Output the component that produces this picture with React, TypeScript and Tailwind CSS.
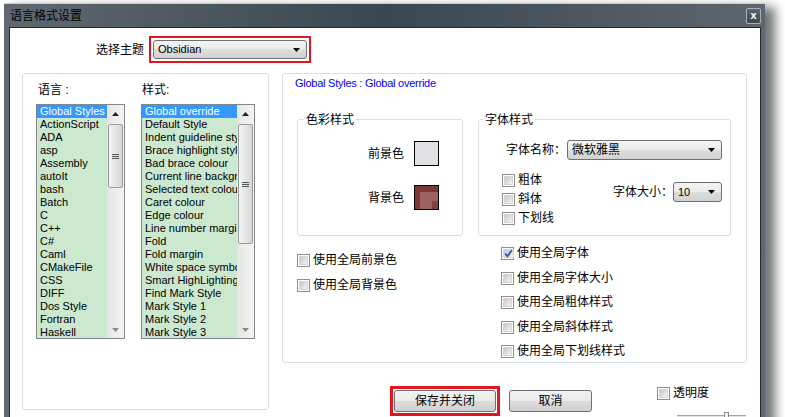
import React from "react";

const languages = [
  "Global Styles",
  "ActionScript",
  "ADA",
  "asp",
  "Assembly",
  "autoIt",
  "bash",
  "Batch",
  "C",
  "C++",
  "C#",
  "Caml",
  "CMakeFile",
  "CSS",
  "DIFF",
  "Dos Style",
  "Fortran",
  "Haskell",
];

const styles = [
  "Global override",
  "Default Style",
  "Indent guideline style",
  "Brace highlight style",
  "Bad brace colour",
  "Current line background colour",
  "Selected text colour",
  "Caret colour",
  "Edge colour",
  "Line number margin",
  "Fold",
  "Fold margin",
  "White space symbol",
  "Smart HighLighting",
  "Find Mark Style",
  "Mark Style 1",
  "Mark Style 2",
  "Mark Style 3",
];

const Checkbox = ({ checked = false }: { checked?: boolean }) => (
  <span className="flex w-[13px] h-[13px] shrink-0 border border-[#8e8f8f] bg-white p-[1px]">
    <span className="flex flex-1 items-center justify-center border border-[#d4d6d8] bg-linear-to-br from-[#c3c6ca] to-[#f6f6f6]">
      {checked && (
        <svg width="9" height="9" viewBox="0 0 9 9">
          <path d="M1.2 4.6 L3.4 7.2 L7.8 1.2" fill="none" stroke="#3b55a8" strokeWidth="1.9" />
        </svg>
      )}
    </span>
  </span>
);

const CheckRow = ({ label, checked }: { label: string; checked?: boolean }) => (
  <div className="flex items-center gap-[3px] h-[13px] text-[12px] leading-[13px] whitespace-nowrap">
    <Checkbox checked={checked} />
    <span>{label}</span>
  </div>
);

const Arrow = () => (
  <svg width="7" height="4" viewBox="0 0 7 4">
    <polygon points="0,0 7,0 3.5,4" fill="#000" />
  </svg>
);

const Select = ({ text, className, textClass }: { text: string; className: string; textClass: string }) => (
  <div
    className={`${className} flex items-center justify-between pl-[4px] pr-[6px] border border-[#707070] rounded-[3px] bg-[linear-gradient(to_bottom,#f4f4f4_0%,#ebebeb_50%,#dedede_50%,#d2d2d2_100%)]`}
  >
    <span className={textClass}>{text}</span>
    <Arrow />
  </div>
);

const Button = ({ label, className }: { label: string; className: string }) => (
  <div
    className={`${className} h-[22px] flex items-center justify-center border border-[#707070] rounded-[3px] text-[12px] bg-[linear-gradient(to_bottom,#f2f2f2_0%,#ebebeb_50%,#dddddd_50%,#cfcfcf_100%)]`}
  >
    {label}
  </div>
);

const ScrollBar = ({ thumb }: { thumb: string }) => (
  <div className="flex flex-col w-[17px] shrink-0 bg-linear-to-r from-[#e6e6e6] to-[#f4f4f4]">
    <div className="h-[17px] flex items-center justify-center">
      <svg width="7" height="4" viewBox="0 0 7 4">
        <polygon points="0,4 7,4 3.5,0" fill="#222" />
      </svg>
    </div>
    <div
      className={`${thumb} mt-[2px] mx-[1px] rounded-[2px] border border-[#9b9b9b] bg-linear-to-r from-[#f5f5f5] to-[#d6d6d6] flex flex-col items-center justify-center gap-[1px]`}
    >
      <span className="w-[7px] h-[1px] bg-[#555]" />
      <span className="w-[7px] h-[1px] bg-[#555]" />
      <span className="w-[7px] h-[1px] bg-[#555]" />
    </div>
    <div className="flex-1" />
    <div className="h-[17px] flex items-center justify-center">
      <svg width="7" height="4" viewBox="0 0 7 4">
        <polygon points="0,0 7,0 3.5,4" fill="#8a8a8a" />
      </svg>
    </div>
  </div>
);

const ListBox = ({ items, className, thumb }: { items: string[]; className: string; thumb: string }) => (
  <div className={`${className} h-[235px] flex border border-[#82878f] bg-[#cce8cf]`}>
    <div className="flex-1 overflow-hidden">
      {items.map((item, i) => (
        <div
          key={item}
          className={
            i === 0
              ? "h-[13px] leading-[13px] pl-[3px] text-[11px] whitespace-nowrap bg-[#3399ff] text-white"
              : "h-[13px] leading-[13px] pl-[3px] text-[11px] whitespace-nowrap text-black"
          }
        >
          {item}
        </div>
      ))}
    </div>
    <ScrollBar thumb={thumb} />
  </div>
);

const App = () => {
  return (
    <div className="w-[785px] h-[417px] overflow-hidden bg-white pt-[3px] pl-[4px] text-black font-['Liberation_Sans','Noto_Sans_CJK_SC',sans-serif]">
      <div className="flex flex-col w-[761px] h-[440px] border-t border-[#c9ced2] pl-[5px] pr-[4px] bg-linear-to-r from-[#5e6971] via-[#3b4750] to-[#5c6770] shadow-[10px_4px_10px_rgba(0,0,0,0.55)]">
        {/* title bar */}
        <div className="h-[23px] flex items-center justify-between pl-[1px]">
          <span className="text-[12px] leading-[14px]">语言格式设置</span>
          <div className="w-[15px] h-[16px] flex items-center justify-center border border-[#a9b2b8] rounded-[2px] bg-linear-to-b from-[#59646c] to-[#3d4850] text-white text-[11px] font-bold leading-none">
            x
          </div>
        </div>

        {/* client */}
        <div className="flex-1 flex flex-col border border-[#1f2b34] bg-white">
          <div className="flex items-center gap-[5px] mt-[8px] ml-[86px]">
            <span className="w-[48px] text-[12px] leading-[14px]">选择主题</span>
            <div className="border-2 border-[#e3151f] p-[2px]">
              <Select text="Obsidian" className="w-[154px] h-[19px]" textClass="text-[11px]" />
            </div>
          </div>

          <div className="flex gap-[13px] mt-[10px] ml-[12px]">
            {/* left box */}
            <div className="flex gap-[16px] w-[247px] h-[337px] pl-[13px] border border-[#d5dfe5] rounded-[3px]">
              <div className="flex flex-col">
                <span className="mt-[9px] pl-[2px] h-[14px] text-[12px] leading-[14px] whitespace-pre">语言 :</span>
                <div className="mt-[7px]">
                  <ListBox items={languages} className="w-[89px]" thumb="h-[64px]" />
                </div>
              </div>
              <div className="flex flex-col">
                <span className="mt-[9px] pl-[1px] h-[14px] text-[12px] leading-[14px]">样式:</span>
                <div className="mt-[7px]">
                  <ListBox items={styles} className="w-[114px]" thumb="h-[120px]" />
                </div>
              </div>
            </div>

            {/* right column */}
            <div className="flex flex-col">
              <div className="flex flex-col w-[465px] h-[290px] pl-[12px] border border-[#d5dfe5] rounded-[3px]">
                <span className="mt-[3px] text-[11px] leading-[13px] tracking-[-0.25px] text-[#0000ff]">
                  Global Styles : Global override
                </span>

                <div className="flex gap-[15px] mt-[29px] ml-[2px]">
                  <div className="relative w-[166px] h-[117px] border border-[#d5dfe5] rounded-[3px] flex flex-col items-end pt-[21px] pr-[23px] gap-[19px]">
                    <span className="absolute -top-[7px] left-[6px] px-[2px] bg-white text-[12px] leading-[14px]">
                      色彩样式
                    </span>
                    <div className="flex items-center gap-[10px]">
                      <span className="text-[12px] leading-[14px]">前景色</span>
                      <div className="w-[25px] h-[25px] border border-black bg-[#e1e1e3]" />
                    </div>
                    <div className="flex items-center gap-[10px]">
                      <span className="text-[12px] leading-[14px]">背景色</span>
                      <div className="w-[25px] h-[25px] border border-black bg-[#7a3838] flex items-end justify-end">
                        <div className="w-[18px] h-[17px] bg-[#9c6262] flex items-end justify-end">
                          <div className="w-[6px] h-[8px] bg-[#7f4040]" />
                        </div>
                      </div>
                    </div>
                  </div>

                  <div className="relative w-[253px] h-[117px] border border-[#d5dfe5] rounded-[3px] flex flex-col pt-[20px] pl-[23px] pr-[8px]">
                    <span className="absolute -top-[7px] left-[4px] px-[2px] bg-white text-[12px] leading-[14px]">
                      字体样式
                    </span>
                    <div className="flex items-center gap-[1px] pl-[4px]">
                      <span className="w-[60px] text-[12px] leading-[14px]">字体名称：</span>
                      <Select text="微软雅黑" className="w-[155px] h-[20px]" textClass="text-[12px]" />
                    </div>
                    <div className="flex justify-between mt-[14px]">
                      <div className="flex flex-col gap-[6px]">
                        <CheckRow label="粗体" />
                        <CheckRow label="斜体" />
                        <CheckRow label="下划线" />
                      </div>
                      <div className="flex items-center mt-[8px] h-[20px]">
                        <span className="w-[60px] text-[12px] leading-[14px]">字体大小：</span>
                        <Select text="10" className="w-[49px] h-[20px]" textClass="text-[11px]" />
                      </div>
                    </div>
                  </div>
                </div>

                <div className="flex ml-[2px]">
                  <div className="flex flex-col w-[166px] mt-[18px] gap-[12px]">
                    <CheckRow label="使用全局前景色" />
                    <CheckRow label="使用全局背景色" />
                  </div>
                  <div className="flex flex-col ml-[15px] pl-[23px] mt-[11px] gap-[11.5px]">
                    <CheckRow label="使用全局字体" checked />
                    <CheckRow label="使用全局字体大小" />
                    <CheckRow label="使用全局粗体样式" />
                    <CheckRow label="使用全局斜体样式" />
                    <CheckRow label="使用全局下划线样式" />
                  </div>
                </div>
              </div>

              {/* bottom buttons */}
              <div className="flex items-start mt-[23px] ml-[108px]">
                <div className="border-[3px] border-[#e3151f] p-[1px]">
                  <Button label="保存并关闭" className="w-[102px]" />
                </div>
                <Button label="取消" className="w-[83px] ml-[9px] mt-[4px]" />
                <div className="flex flex-col ml-[65px] mt-[1px]">
                  <CheckRow label="透明度" />
                  <div className="relative ml-[20px] mt-[15px] w-[69px] h-[4px] border-t border-[#a3a3a3] bg-[#e4e4e4]">
                    <div className="absolute -top-[4px] left-[47px] w-[5px] h-[8px] border border-[#8a8a8a] bg-[#f0f0f0]" />
                  </div>
                </div>
              </div>
            </div>
          </div>
        </div>
      </div>
    </div>
  );
};

export default App;
